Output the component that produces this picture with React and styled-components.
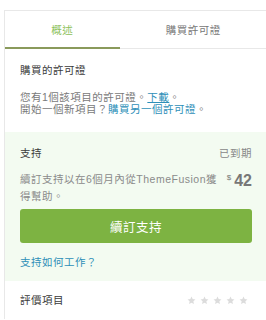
import React from "react";
import styled, { createGlobalStyle } from "styled-components";

const GlobalStyle = createGlobalStyle`
  html, body {
    margin: 0;
    padding: 0;
    background: #ffffff;
    overflow: hidden;
  }
  body {
    font-family: "Liberation Sans", "Noto Sans CJK TC", sans-serif;
    font-size: 10.5px;
    letter-spacing: 0.5px;
    color: #777;
  }
`;

const Panel = styled.div`
  box-sizing: border-box;
  width: 263px;
  margin: 10px 0 0 4px;
  border-top: 1px solid #e8e8e8;
  border-left: 1px solid #e8e8e8;
`;

const Tabs = styled.div`
  display: flex;
  height: 38px;
  box-sizing: border-box;
  border-bottom: 1px solid #e8e8e8;
`;

const Tab = styled.div`
  flex: 1 1 auto;
  display: flex;
  align-items: center;
  justify-content: center;
  box-sizing: border-box;
  margin-bottom: -1px;
  border-bottom: 2px solid ${(p) => (p.$active ? "#8a9a5b" : "transparent")};
  color: ${(p) => (p.$active ? "#8cbf5a" : "#777")};
  font-size: 10.5px;
`;

const Section = styled.div`
  padding: ${(p) => p.$pad || "14px 15px 17px"};
  background: ${(p) => p.$bg || "transparent"};
`;

const Heading = styled.div`
  color: #3a3a3a;
  font-size: 10.5px;
  line-height: 14px;
`;

const Text = styled.p`
  margin: ${(p) => p.$margin || "14px 0 0"};
  line-height: ${(p) => p.$lh || "12px"};
  color: #7a7a7a;
`;

const Link = styled.a`
  color: #2e8fb8;
  text-decoration: ${(p) => (p.$underline ? "underline" : "none")};
`;

const HeaderRow = styled.div`
  display: flex;
  justify-content: space-between;
  align-items: center;
`;

const Muted = styled.span`
  color: #888;
  line-height: 14px;
`;

const PriceRow = styled.div`
  display: flex;
  justify-content: space-between;
  align-items: flex-start;
  gap: 4px;
  margin-top: 11px;
`;

const Desc = styled.div`
  width: 200px;
  line-height: 17px;
  color: #8a8a8a;
`;

const Price = styled.div`
  display: flex;
  align-items: flex-start;
  gap: 3px;
  color: #777;
  font-size: 16px;
  font-weight: bold;
  letter-spacing: 0;
  line-height: 19px;
  sup {
    font-size: 8px;
    font-weight: normal;
    line-height: 10px;
    margin-top: 2px;
  }
`;

const Button = styled.button`
  display: block;
  width: 100%;
  height: 34px;
  margin-top: 4px;
  border: none;
  border-radius: 3px;
  background: #7db342;
  color: #fff;
  font-family: inherit;
  font-size: 12.5px;
  letter-spacing: 0.5px;
  cursor: pointer;
`;

const HelpLink = styled(Link)`
  display: block;
  margin-top: 12px;
  line-height: 14px;
`;

const Stars = styled.div`
  display: flex;
  gap: 4px;
  margin-right: 4px;
`;

const Star = () => (
  <svg width="9" height="9" viewBox="0 0 24 24">
    <polygon
      points="12,1.5 15.1,8.3 22.5,9.1 17,14.1 18.5,21.5 12,17.8 5.5,21.5 7,14.1 1.5,9.1 8.9,8.3"
      fill="#dcdcdc"
    />
  </svg>
);

export default function App() {
  return (
    <>
      <GlobalStyle />
      <Panel>
        <Tabs>
          <Tab $active>概述</Tab>
          <Tab>購買許可證</Tab>
        </Tabs>
        <Section>
          <Heading>購買的許可證</Heading>
          <Text>
            您有1個該項目的許可證。<Link href="#" $underline>下載</Link>。
            <br />
            開始一個新項目？<Link href="#">購買另一個許可證</Link>。
          </Text>
        </Section>
        <Section $bg="#f3fbf1" $pad="14px 15px 12px">
          <HeaderRow>
            <Heading>支持</Heading>
            <Muted>已到期</Muted>
          </HeaderRow>
          <PriceRow>
            <Desc>續訂支持以在6個月內從ThemeFusion獲得幫助。</Desc>
            <Price>
              <sup>$</sup>42
            </Price>
          </PriceRow>
          <Button>續訂支持</Button>
          <HelpLink href="#">支持如何工作？</HelpLink>
        </Section>
        <Section $pad="12px 15px">
          <HeaderRow>
            <Heading>評價項目</Heading>
            <Stars>
              {[0, 1, 2, 3, 4].map((i) => (
                <Star key={i} />
              ))}
            </Stars>
          </HeaderRow>
        </Section>
      </Panel>
    </>
  );
}
